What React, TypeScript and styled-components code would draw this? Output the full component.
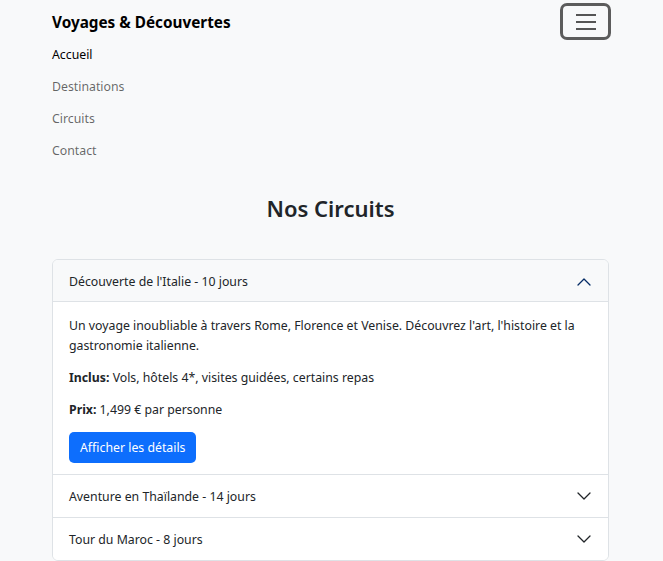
import { useState } from "react";
import styled, { createGlobalStyle } from "styled-components";

const GlobalStyle = createGlobalStyle`
  html, body {
    margin: 0;
    padding: 0;
    background: #f8f9fa;
    font-family: "Noto Sans", "Segoe UI", Roboto, sans-serif;
    font-size: 12.3px;
    color: #212529;
  }
  * {
    box-sizing: border-box;
  }
`;

const Page = styled.div`
  padding: 3px 54px 0 52px;
`;

const NavBar = styled.nav`
  display: flex;
  flex-direction: column;
`;

const BrandRow = styled.div`
  display: flex;
  align-items: center;
  justify-content: space-between;
  height: 37px;
`;

const Brand = styled.a`
  font-size: 15.3px;
  font-weight: 700;
  color: #000;
  text-decoration: none;
`;

const Toggler = styled.button`
  width: 51px;
  height: 37px;
  margin-right: -2px;
  border: 3px solid #5c5c5c;
  border-radius: 7px;
  background: transparent;
  display: flex;
  align-items: center;
  justify-content: center;
  padding: 0;
`;

const NavList = styled.ul`
  list-style: none;
  margin: -1px 0 0;
  padding: 0;
`;

const NavLink = styled.li<{ $active?: boolean }>`
  height: 32px;
  line-height: 32px;
  font-size: 12.3px;
  color: ${(p) => (p.$active ? "#000" : "rgba(0, 0, 0, 0.6)")};
`;

const Title = styled.h2`
  margin: 26px 0 36px;
  text-align: center;
  font-size: 22px;
  line-height: 30px;
  font-weight: 600;
`;

const Accordion = styled.div`
  border: 1px solid #dee2e6;
  border-radius: 6px;
  background: #fff;
  overflow: hidden;
`;

const Item = styled.div`
  & + & {
    border-top: 1px solid #dee2e6;
  }
`;

const Header = styled.button<{ $open: boolean }>`
  width: 100%;
  display: flex;
  align-items: center;
  justify-content: space-between;
  height: 42px;
  padding: ${(p) => (p.$open ? "2px" : "0")} 16px 0 16px;
  border: none;
  border-bottom: ${(p) => (p.$open ? "1px solid #dee2e6" : "none")};
  background: ${(p) => (p.$open ? "#f8f9fa" : "#fff")};
  font-family: inherit;
  font-size: 12.3px;
  color: #212529;
  text-align: left;
  cursor: pointer;
`;

const Body = styled.div`
  padding: 14px 16px 11px;
  font-size: 12.3px;
  line-height: 20px;

  p {
    margin: 0 0 12px;
  }
`;

const Button = styled.button`
  height: 31px;
  padding: 0 11px;
  border: none;
  border-radius: 5px;
  background: #0d6efd;
  color: #fff;
  font-family: inherit;
  font-size: 12.3px;
  cursor: pointer;
`;

const Chevron = ({ up }: { up: boolean }) => (
  <svg width="16" height="16" viewBox="0 0 16 16" fill="none">
    <path
      d={up ? "M2 11l6-6 6 6" : "M2 5l6 6 6-6"}
      stroke={up ? "#052c65" : "#212529"}
      strokeWidth="1.3"
      strokeLinecap="round"
      strokeLinejoin="round"
    />
  </svg>
);

const tours = [
  {
    title: "Découverte de l'Italie - 10 jours",
    text: "Un voyage inoubliable à travers Rome, Florence et Venise. Découvrez l'art, l'histoire et la gastronomie italienne.",
    inclus: "Vols, hôtels 4*, visites guidées, certains repas",
    prix: "1,499 € par personne",
  },
  {
    title: "Aventure en Thaïlande - 14 jours",
    text: "Plages paradisiaques, temples bouddhistes et cuisine épicée au cœur de l'Asie du Sud-Est.",
    inclus: "Vols, hôtels, excursions, petits-déjeuners",
    prix: "1,899 € par personne",
  },
  {
    title: "Tour du Maroc - 8 jours",
    text: "De Marrakech au désert du Sahara, une immersion dans les couleurs et les saveurs du Maroc.",
    inclus: "Vols, riads, guide local, demi-pension",
    prix: "999 € par personne",
  },
];

const links = ["Accueil", "Destinations", "Circuits", "Contact"];

export default function App() {
  const [open, setOpen] = useState<number>(0);

  return (
    <Page>
      <GlobalStyle />
      <NavBar>
        <BrandRow>
          <Brand href="#">Voyages &amp; Découvertes</Brand>
          <Toggler aria-label="menu">
            <svg width="22" height="18" viewBox="0 0 22 18">
              <path d="M1 2h20M1 9h20M1 16h20" stroke="#555" strokeWidth="2" />
            </svg>
          </Toggler>
        </BrandRow>
        <NavList>
          {links.map((l, i) => (
            <NavLink key={l} $active={i === 0}>
              {l}
            </NavLink>
          ))}
        </NavList>
      </NavBar>

      <Title>Nos Circuits</Title>

      <Accordion>
        {tours.map((t, i) => (
          <Item key={t.title}>
            <Header $open={open === i} onClick={() => setOpen(open === i ? -1 : i)}>
              {t.title}
              <Chevron up={open === i} />
            </Header>
            {open === i && (
              <Body>
                <p>{t.text}</p>
                <p>
                  <strong>Inclus:</strong> {t.inclus}
                </p>
                <p>
                  <strong>Prix:</strong> {t.prix}
                </p>
                <Button>Afficher les détails</Button>
              </Body>
            )}
          </Item>
        ))}
      </Accordion>
    </Page>
  );
}
